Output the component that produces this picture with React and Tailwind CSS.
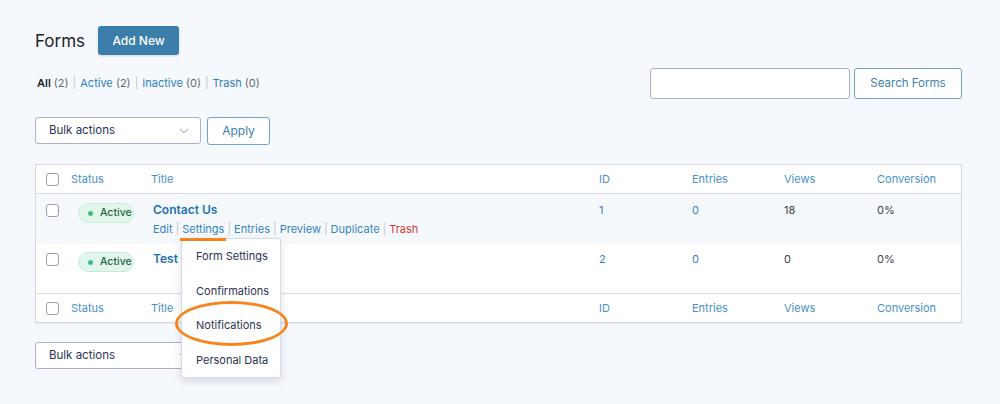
import React from 'react';
import { ChevronDown } from 'lucide-react';

const cols = 'grid grid-cols-[35px_80px_448px_93px_92px_93px_1fr]';

const Checkbox = () => (
  <div className="w-[13px] h-[13px] rounded-[3px] border border-[#9b9eb8] bg-white"></div>
);

const Badge = () => (
  <div className="flex items-center gap-[7px] w-[56px] h-[20px] pl-[9px] rounded-full bg-[#e3f6ec] border border-[#c5ebd6]">
    <span className="w-[5px] h-[5px] rounded-full bg-[#3fbf7f]"></span>
    <span className="text-[10.5px] leading-none font-medium text-[#24683f]">Active</span>
  </div>
);

const HeadRow = ({ top }) => (
  <div className={`${cols} h-[29px] items-center text-[11px] text-[#4a8fcb] ${top ? 'border-b' : 'border-t'} border-[#dcdcea]`}>
    <div className="pl-[10px]"><Checkbox /></div>
    <div>Status</div>
    <div>Title</div>
    <div>ID</div>
    <div>Entries</div>
    <div>Views</div>
    <div>Conversion</div>
  </div>
);

const SelectBox = () => (
  <div className="w-[166px] h-[27px] flex items-center justify-between pl-[13px] pr-[9px] bg-white border border-[#aeb0cb] rounded-[3px] text-[11.5px] text-[#2c3352]">
    <span>Bulk actions</span>
    <ChevronDown size={14} strokeWidth={1.5} className="text-[#7a7f96]" />
  </div>
);

const Sep = ({ tight }) => (
  <span className={`text-[#c3c4c7] ${tight ? 'mx-[3px]' : 'mx-[4px]'}`}>|</span>
);

export default function App() {
  return (
    <div className="min-h-[404px] bg-[#f5f8fc] pl-[35px] pr-[38px] pt-[26px] font-['Inter',sans-serif] text-[#1d2327]">
      {/* Page title */}
      <div className="flex items-center gap-[13px]">
        <h1 className="text-[17px] leading-none text-[#1d2327] pt-[1px]">Forms</h1>
        <button className="w-[81px] h-[29px] rounded-[3px] bg-[#3b7eab] text-white text-[12px] font-medium shadow-sm">Add New</button>
      </div>

      {/* Filters + search */}
      <div className="flex items-center justify-between mt-[13px]">
        <div className="text-[11px] pl-[2px] text-[#646970]">
          <span className="font-semibold text-[#1d2327]">All</span> (2)
          <Sep />
          <span className="text-[#2f7fc1]">Active</span> (2)
          <Sep />
          <span className="text-[#2f7fc1]">Inactive</span> (0)
          <Sep />
          <span className="text-[#2f7fc1]">Trash</span> (0)
        </div>
        <div className="flex gap-[4px]">
          <div className="w-[200px] h-[31px] bg-white border border-[#aeb0cb] rounded-[3px]"></div>
          <button className="w-[108px] h-[31px] bg-white border border-[#6ea2cc] rounded-[3px] text-[11.5px] text-[#3d7fb1]">Search Forms</button>
        </div>
      </div>

      {/* Bulk actions */}
      <div className="flex gap-[6px] mt-[18px]">
        <SelectBox />
        <button className="w-[63px] h-[28px] bg-white border border-[#6ea2cc] rounded-[3px] text-[12px] text-[#3d7fb1]">Apply</button>
      </div>

      {/* Table */}
      <div className="mt-[19px] bg-white border border-[#d5d6e0] shadow-[0_1px_1px_rgba(0,0,0,0.04)]">
        <HeadRow top />

        <div className={`${cols} h-[50px] bg-[#f6f9fc]`}>
          <div className="pl-[10px] pt-[10px]"><Checkbox /></div>
          <div className="pl-[7px] pt-[9px]"><Badge /></div>
          <div className="relative pl-[2px] pt-[7px]">
            <div className="text-[12px] font-semibold text-[#2271b1] leading-[18px]">Contact Us</div>
            <div className="text-[11px] text-[#3582c4] mt-[2px] leading-[16px] flex">
              <span>Edit</span>
              <Sep tight />
              <span className="relative">
                Settings
                <span className="absolute z-20 left-[-2px] right-[-2px] top-[17px] h-[3px] bg-[#f5821f]"></span>
              </span>
              <Sep tight />
              <span>Entries</span>
              <Sep tight />
              <span>Preview</span>
              <Sep tight />
              <span>Duplicate</span>
              <Sep tight />
              <span className="text-[#d63638]">Trash</span>
            </div>
            {/* Settings dropdown */}
            <div className="absolute left-[30px] top-[44px] z-10 w-[100px] bg-white border border-[#d8d9e4] rounded-[2px] shadow-[0_3px_8px_rgba(40,45,80,0.15)] text-[11px] text-[#2c3352]">
              <div className="h-[34.5px] flex items-center pl-[14px]">Form Settings</div>
              <div className="h-[34.5px] flex items-center pl-[14px]">Confirmations</div>
              <div className="h-[34.5px] flex items-center pl-[14px]">Notifications</div>
              <div className="h-[34.5px] flex items-center pl-[14px]">Personal Data</div>
              <div className="absolute left-[-7px] top-[62px] w-[113px] h-[45px] rounded-[50%] border-[3.5px] border-[#f5861f]"></div>
            </div>
          </div>
          <div className="pt-[8px] text-[11px] text-[#3582c4]">1</div>
          <div className="pt-[8px] text-[11px] text-[#3582c4]">0</div>
          <div className="pt-[8px] text-[11px] text-[#3c434a]">18</div>
          <div className="pt-[8px] text-[11px] text-[#3c434a]">0%</div>
        </div>

        <div className={`${cols} h-[49px]`}>
          <div className="pl-[10px] pt-[9px]"><Checkbox /></div>
          <div className="pl-[7px] pt-[8px]"><Badge /></div>
          <div className="pl-[2px] pt-[6px] text-[12px] font-semibold text-[#2271b1] leading-[18px]">Test</div>
          <div className="pt-[7px] text-[11px] text-[#3582c4]">2</div>
          <div className="pt-[7px] text-[11px] text-[#3582c4]">0</div>
          <div className="pt-[7px] text-[11px] text-[#3c434a]">0</div>
          <div className="pt-[7px] text-[11px] text-[#3c434a]">0%</div>
        </div>

        <HeadRow />
      </div>

      <div className="mt-[19px]">
        <SelectBox />
      </div>
    </div>
  );
}
